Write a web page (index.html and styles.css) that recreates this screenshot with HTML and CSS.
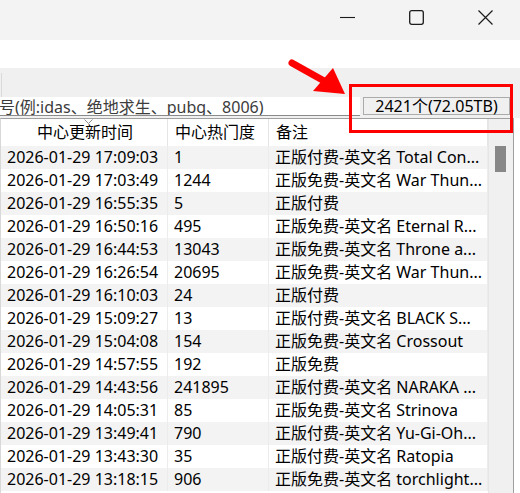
FILE: index.html
```html
<!DOCTYPE html>
<html lang="zh-CN">
<head>
<meta charset="utf-8">
<title>列表</title>
<link rel="stylesheet" href="styles.css">
</head>
<body>
<div class="titlebar">
  <div class="cap"><svg width="15" height="15" viewBox="0 0 15 15"><line x1="0" y1="7.5" x2="15" y2="7.5" stroke="#1b1b1b" stroke-width="1.1"/></svg></div>
  <div class="cap"><svg width="15" height="15" viewBox="0 0 15 15"><rect x="0.7" y="0.7" width="13.6" height="13.6" rx="2" fill="none" stroke="#1b1b1b" stroke-width="1.3"/></svg></div>
  <div class="cap"><svg width="15" height="15" viewBox="0 0 15 15"><path d="M0.5 0.5 L14.5 14.5 M14.5 0.5 L0.5 14.5" stroke="#1b1b1b" stroke-width="1.2" fill="none"/></svg></div>
</div>
<div class="band"></div>
<div class="panel">
  <div class="tabedge"></div>
  <div class="searchrow">
    <div class="search">号(例:idas、绝地求生、pubg、8006)</div>
    <div class="count">2421个(72.05TB)</div>
  </div>
</div>
<div class="list">
  <div class="grid">
    <div class="hd hd-c">中心更新时间<svg class="sort" width="9" height="6" viewBox="0 0 9 6"><path d="M0.5 0.5 L4.5 4.5 L8.5 0.5" fill="none" stroke="#8a8a8a" stroke-width="1"/></svg></div>
    <div class="hd">中心热门度</div>
    <div class="hd">备注</div>

    <div class="c s">2026-01-29 17:09:03</div><div class="c s">1</div><div class="c s">正版付费-英文名 Total Con...</div>
    <div class="c">2026-01-29 17:03:49</div><div class="c">1244</div><div class="c">正版免费-英文名 War Thun...</div>
    <div class="c s">2026-01-29 16:55:35</div><div class="c s">5</div><div class="c s">正版付费</div>
    <div class="c">2026-01-29 16:50:16</div><div class="c">495</div><div class="c">正版免费-英文名 Eternal R...</div>
    <div class="c s">2026-01-29 16:44:53</div><div class="c s">13043</div><div class="c s">正版免费-英文名 Throne a...</div>
    <div class="c">2026-01-29 16:26:54</div><div class="c">20695</div><div class="c">正版免费-英文名 War Thun...</div>
    <div class="c s">2026-01-29 16:10:03</div><div class="c s">24</div><div class="c s">正版付费</div>
    <div class="c">2026-01-29 15:09:27</div><div class="c">13</div><div class="c">正版付费-英文名 BLACK S...</div>
    <div class="c s">2026-01-29 15:04:08</div><div class="c s">154</div><div class="c s">正版免费-英文名 Crossout</div>
    <div class="c">2026-01-29 14:57:55</div><div class="c">192</div><div class="c">正版免费</div>
    <div class="c s">2026-01-29 14:43:56</div><div class="c s">241895</div><div class="c s">正版付费-英文名 NARAKA ...</div>
    <div class="c">2026-01-29 14:05:31</div><div class="c">85</div><div class="c">正版免费-英文名 Strinova</div>
    <div class="c s">2026-01-29 13:49:41</div><div class="c s">790</div><div class="c s">正版付费-英文名 Yu-Gi-Oh...</div>
    <div class="c">2026-01-29 13:43:30</div><div class="c">35</div><div class="c">正版付费-英文名 Ratopia</div>
    <div class="c s">2026-01-29 13:18:15</div><div class="c s">906</div><div class="c s">正版免费-英文名 torchlight...</div>
  </div>
  <div class="vscroll"><div class="thumb"></div></div>
</div>
<svg class="arrow" width="70" height="45" viewBox="0 0 70 45">
  <line x1="4" y1="4" x2="38" y2="23" stroke="#ff0000" stroke-width="7" stroke-linecap="round"/>
  <polygon points="25,32 45,9 57,35" fill="#ff0000"/>
</svg>
<div class="redbox"></div>
</body>
</html>
```
FILE: styles.css
```css
html, body {
  margin: 0;
  padding: 0;
}
body {
  width: 520px;
  height: 493px;
  overflow: hidden;
  position: relative;
  background: #ffffff;
  color: #000000;
  font-family: "Noto Sans", "Noto Sans CJK SC", sans-serif;
  font-size: 16px;
}
.titlebar {
  height: 40px;
  background: #f3f3f3;
  display: flex;
  justify-content: flex-end;
}
.cap {
  width: 69px;
  display: flex;
  justify-content: center;
  align-items: flex-start;
  padding-top: 10px;
  box-sizing: border-box;
}
.cap svg { display: block; }
.band {
  height: 28px;
  background: #ffffff;
}
.panel {
  background: #f0f0f0;
  padding-top: 5px;
}
.tabedge {
  height: 24px;
  width: 6px;
  border-left: 1px solid #dadada;
  margin-left: 1px;
}
.searchrow {
  display: flex;
  height: 21px;
}
.search {
  width: 360px;
  height: 18px;
  background: #ffffff;
  border-bottom: 1px solid #8a8a8a;
  overflow: hidden;
  white-space: nowrap;
  color: #3c3c3c;
  font-size: 16px;
  line-height: 21px;
  text-indent: -1px;
}
.count {
  margin-left: 3px;
  width: 147px;
  height: 18px;
  box-sizing: border-box;
  border: 1px solid #ababab;
  background: #f0f0f0;
  text-align: center;
  font-size: 16px;
  line-height: 16px;
  white-space: nowrap;
}
.list {
  display: flex;
  width: 512px;
  height: 380px;
  border-top: 1px solid #a0a0a0;
  border-left: 1px solid #d8d8d8;
  border-right: 1px solid #a0a0a0;
}
.grid {
  width: 487px;
  display: grid;
  grid-template-columns: 167px 101px 219px;
  grid-auto-rows: 23px;
  grid-template-rows: 27px;
  align-content: start;
}
.hd {
  position: relative;
  background: #ffffff;
  border-right: 1px solid #e5e5e5;
  line-height: 26px;
  padding-left: 7px;
  white-space: nowrap;
}
.hd-c {
  text-align: center;
  padding-left: 2px;
}
.sort {
  position: absolute;
  left: 83px;
  top: 0;
}
.c {
  line-height: 23px;
  padding-left: 6px;
  border-right: 1px solid #ececec;
  white-space: nowrap;
  overflow: hidden;
  color: #000000;
}
.s {
  background: #f3f3f3;
}
.vscroll {
  width: 25px;
  background: #f0f0f0;
  border-left: 1px solid #e6e6e6;
}
.thumb {
  margin: 27px 0 0 6px;
  width: 11px;
  height: 26px;
  background: #878787;
}
.arrow {
  position: absolute;
  left: 288px;
  top: 59px;
}
.redbox {
  position: absolute;
  left: 349px;
  top: 84px;
  width: 158px;
  height: 43px;
  border: 3px solid #ff0000;
}
```
